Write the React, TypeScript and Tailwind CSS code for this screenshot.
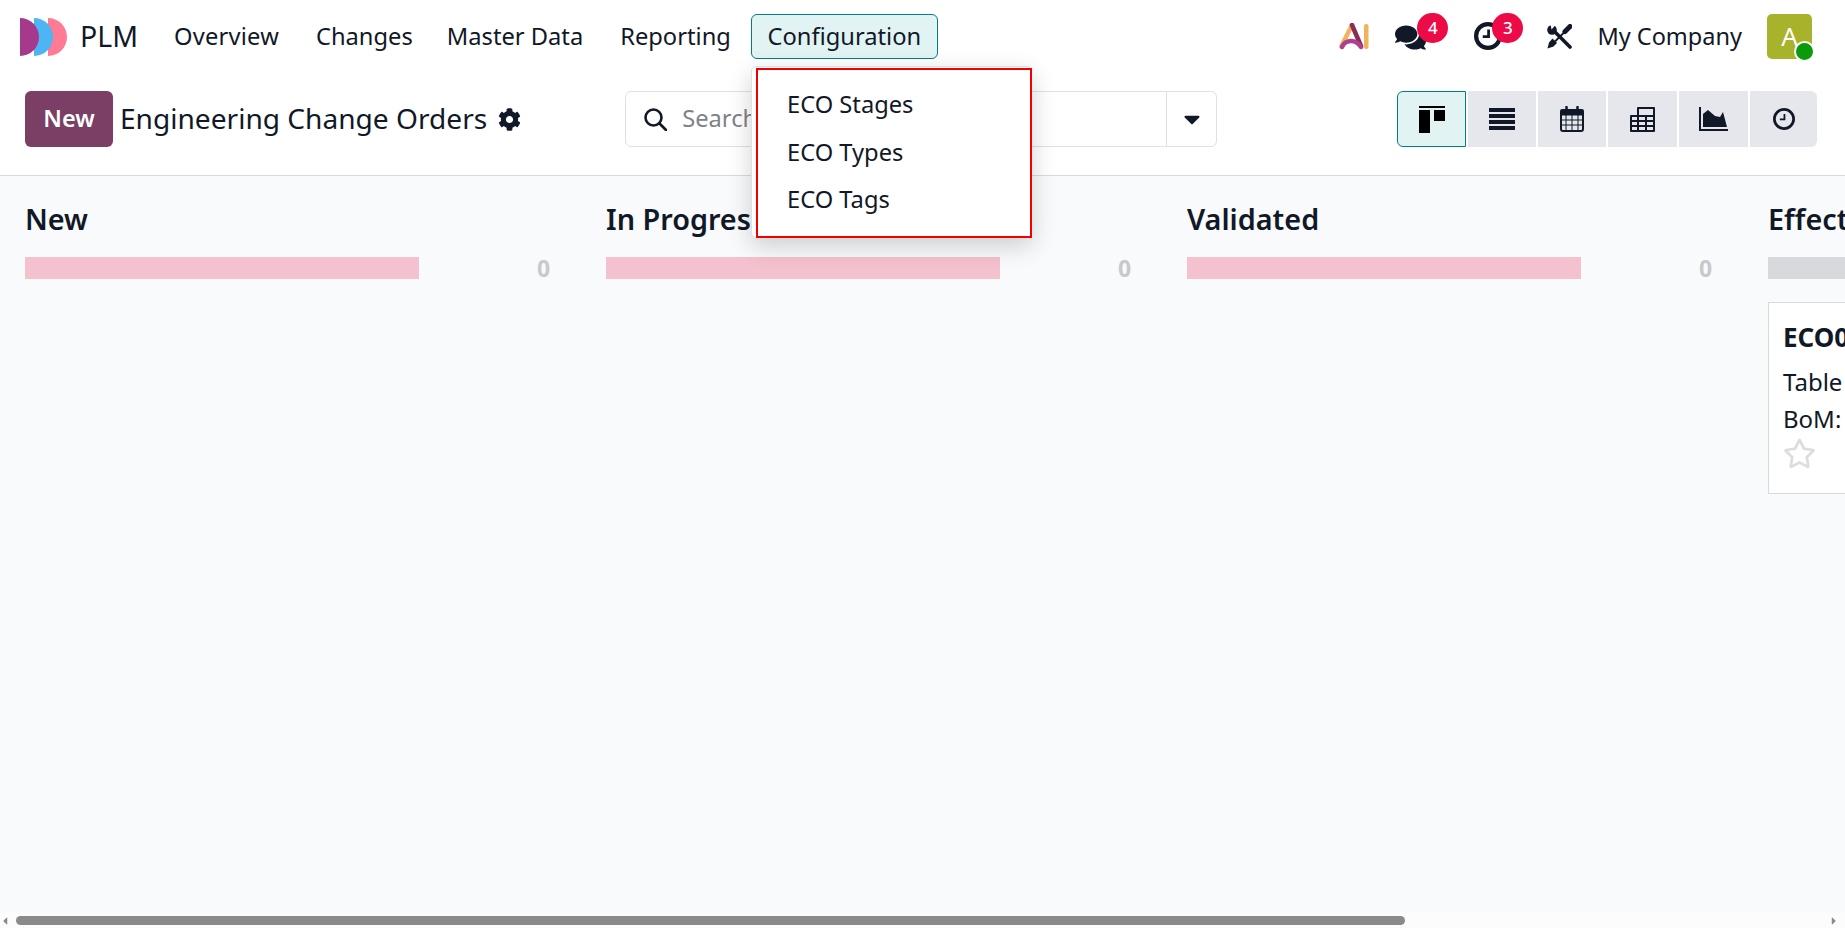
import React from "react";
import { FaComments, FaCog, FaCaretDown, FaRegStar, FaCaretLeft, FaCaretRight } from "react-icons/fa";

const ink = "text-[#111827]";

function Logo() {
  return (
    <svg width="47" height="38" viewBox="0 0 47 38" className="shrink-0">
      <path d="M0 0a19 19 0 0 1 0 38z" transform="translate(28 0)" fill="#ff7a93" />
      <path d="M0 0a19 19 0 0 1 0 38z" transform="translate(14 0)" fill="#4db5f3" />
      <path d="M0 0a19 19 0 0 1 0 38z" fill="#a53a8c" />
      <path d="M14 2.5a19 19 0 0 1 0 33a19 19 0 0 0 0-33z" fill="#1d3f8a" />
      <path d="M28 2.5a19 19 0 0 1 0 33a19 19 0 0 0 0-33z" fill="#2a4f9a" />
    </svg>
  );
}

function AiLogo() {
  return (
    <svg width="30" height="27" viewBox="0 0 30 27" className="shrink-0">
      <path d="M13 2L2.5 23" stroke="#f0b45c" strokeWidth="4.5" strokeLinecap="round" fill="none" />
      <path d="M13 2l9 21" stroke="#8d2d55" strokeWidth="4.5" strokeLinecap="round" fill="none" />
      <path d="M3 24c3-7 13-9 19 0" stroke="#b13f90" strokeWidth="4.5" strokeLinecap="round" fill="none" />
      <rect x="25" y="1" width="4.5" height="25" rx="2.2" fill="#f0b45c" />
    </svg>
  );
}

function ClockIcon({ size, sw }: { size: number; sw: number }) {
  return (
    <svg width={size} height={size} viewBox="0 0 24 24" fill="none" stroke="#111827">
      <circle cx="12" cy="12" r={12 - sw / 2} strokeWidth={sw} />
      <path d="M12.5 6.5v6H7.5" strokeWidth={sw * 0.65} />
    </svg>
  );
}

function ToolsIcon() {
  return (
    <svg width="25" height="25" viewBox="0 0 25 25" className="shrink-0">
      <path d="M7 7L23 23" stroke="#111827" strokeWidth="3.6" strokeLinecap="round" />
      <circle cx="5" cy="6" r="4.8" fill="#111827" />
      <path d="M4.500 5.500L3.500 0L9 .5z" fill="#fff" />
      <path d="M23 2.500L18 7.500" stroke="#111827" strokeWidth="5" strokeLinecap="round" />
      <path d="M18 7.500L8 17.500" stroke="#111827" strokeWidth="1.8" />
      <path d="M5.500 14.500l4.500 4.500-3.500 3.500L0.500 24.500l1.500-6z" fill="#111827" />
    </svg>
  );
}

function SearchIcon() {
  return (
    <svg width="23" height="23" viewBox="0 0 23 23" fill="none" stroke="#111827" className="shrink-0">
      <circle cx="9.500" cy="9.500" r="8" strokeWidth="2.600" />
      <path d="M15.500 15.500L22 22" strokeWidth="2.800" strokeLinecap="round" />
    </svg>
  );
}

function KanbanIcon() {
  return (
    <svg width="26" height="27" viewBox="0 0 26 27" fill="#000">
      <rect x="0" y="0" width="26" height="2" />
      <rect x="0" y="4" width="11" height="23" />
      <rect x="15" y="4" width="11" height="11" />
    </svg>
  );
}

function ListIcon() {
  return (
    <svg width="26" height="22" viewBox="0 0 26 22" fill="#111827">
      <rect y="0" width="26" height="4" />
      <rect y="6" width="26" height="4" />
      <rect y="12" width="26" height="4" />
      <rect y="18" width="26" height="4" />
    </svg>
  );
}

function CalendarIcon() {
  return (
    <svg width="24" height="26" viewBox="0 0 24 26" fill="none" stroke="#111827">
      <rect x="1" y="4" width="22" height="21" rx="2" strokeWidth="2" />
      <rect x="1" y="4" width="22" height="5" fill="#111827" strokeWidth="1" />
      <path d="M6.500 1v6M17.500 1v6" strokeWidth="2.500" strokeLinecap="round" />
      <path d="M6 9v15M12 9v15M18 9v15M2 14h20M2 19h20" strokeWidth="1" />
    </svg>
  );
}

function PivotIcon() {
  return (
    <svg width="25" height="25" viewBox="0 0 25 25" fill="none" stroke="#111827" strokeWidth="2">
      <path d="M8 1h16v23H1V9h7z" strokeLinejoin="round" />
      <path d="M8 1v23M16 9v15M1 9h23M1 14h23M1 19h23" />
    </svg>
  );
}

function AreaIcon() {
  return (
    <svg width="29" height="24" viewBox="0 0 29 24" fill="#111827">
      <path d="M0 0h2v22h27v2H0z" />
      <path d="M4 20V7l5-4 7 6 5 1 3-5 4 15z" />
    </svg>
  );
}

function Nav({ label, className }: { label: string; className: string }) {
  return <span className={`text-[23.7px] leading-none ${className}`}>{label}</span>;
}

function Badge({ n, className }: { n: number; className: string }) {
  return (
    <span className={`absolute -top-[9px] flex h-[30px] w-[31px] items-center justify-center rounded-full bg-[#ec0a47] text-[17px] font-medium text-white ${className}`}>
      {n}
    </span>
  );
}

function Column({ title }: { title: string }) {
  return (
    <div className="mr-[32px] w-[549px] shrink-0">
      <h2 className="pt-[26px] text-[28.8px] font-semibold leading-[34px]">{title}</h2>
      <div className="mt-[21px] flex h-[22px] items-center justify-between">
        <div className="h-[22px] w-[394px] bg-[#f4c2cf]" />
        <span className="mr-[7px] w-[30px] text-[23px] font-bold text-[#c8c9cb]">0</span>
      </div>
    </div>
  );
}

export default function App() {
  return (
    <div
      className={`flex h-[928px] w-[1845px] flex-col overflow-hidden bg-white ${ink}`}
      style={{ fontFamily: '"Noto Sans", sans-serif' }}
    >
      <header className="relative flex h-[73px] shrink-0 items-center">
        <div className="ml-[20px] mt-[1px]"><Logo /></div>
        <span className="ml-[13px] text-[28.5px] leading-none">PLM</span>
        <Nav label="Overview" className="ml-[36px] tracking-[0.2px]" />
        <Nav label="Changes" className="ml-[37px]" />
        <Nav label="Master Data" className="ml-[34px]" />
        <Nav label="Reporting" className="ml-[37px]" />
        <div className="ml-[20px] flex h-[45px] w-[187px] items-center justify-center rounded-[6px] border border-[#017e84] bg-[#e2f3f3] text-[23.7px] leading-none">
          Configuration
        </div>
        <div className="ml-auto flex items-center">
          <AiLogo />
          <div className="relative ml-[26px] h-[30px] w-[32px]">
            <FaComments className="absolute left-0 top-0 text-[31px]" />
            <Badge n={4} className="left-[22px]" />
          </div>
          <div className="relative ml-[47px] h-[30px] w-[32px]">
            <div className="absolute left-0 top-0"><ClockIcon size={28} sw={3.600} /></div>
            <Badge n={3} className="left-[18px]" />
          </div>
          <div className="ml-[41px] flex"><ToolsIcon /></div>
          <span className="ml-[25px] text-[23.5px] leading-none">My Company</span>
          <div className="relative ml-[25px] mr-[33px] flex h-[45px] w-[45px] items-center justify-center rounded-[5px] bg-[#a8b32c] text-[26px] text-white">
            A
            <span className="absolute -bottom-[3px] -right-[3px] h-[21px] w-[21px] rounded-full border-[2px] border-white bg-[#0a9a0a]" />
          </div>
        </div>

        <div className="absolute left-[751px] top-[66px] z-10 h-[172px] w-[281px] rounded-[5px] border border-[#dfe1e4] bg-white shadow-[0_8px_24px_rgba(0,0,0,0.18)]">
          <div className="ml-[4px] mt-[1px] flex h-[170px] w-[276px] flex-col border-[2px] border-[#f00000] pl-[29px] pt-[11px] text-[23.7px]">
            <span className="flex h-[48px] items-center">ECO Stages</span>
            <span className="flex h-[47px] items-center">ECO Types</span>
            <span className="flex h-[47px] items-center">ECO Tags</span>
          </div>
        </div>
      </header>

      <section className="flex h-[103px] shrink-0 items-start border-b border-[#d8dadd] pt-[18px]">
        <button className="ml-[25px] flex h-[56px] w-[88px] items-center justify-center rounded-[6px] bg-[#7b3f66] text-[23.5px] font-semibold text-white">
          New
        </button>
        <span className="ml-[7px] mt-[8px] text-[28.1px] leading-[38px]">Engineering Change Orders</span>
        <FaCog className="ml-[11px] mt-[17px] text-[23px]" />
        <div className="ml-[104px] flex h-[56px] w-[592px] items-center rounded-[6px] border border-[#dfe1e4]">
          <div className="ml-[18px] flex"><SearchIcon /></div>
          <span className="ml-[15px] flex-1 text-[23.7px] text-[#7f8288]">Search...</span>
          <div className="flex h-full w-[50px] items-center justify-center border-l border-[#dfe1e4]">
            <FaCaretDown className="text-[26px]" />
          </div>
        </div>
        <div className="ml-[180px] flex h-[56px] gap-[2px]">
          <div className="flex w-[69px] items-center justify-center rounded-l-[6px] border border-[#017e84] bg-[#e2f3f3]"><KanbanIcon /></div>
          <div className="flex w-[68px] items-center justify-center bg-[#e6e7ec]"><ListIcon /></div>
          <div className="flex w-[68px] items-center justify-center bg-[#e6e7ec]"><CalendarIcon /></div>
          <div className="flex w-[69px] items-center justify-center bg-[#e6e7ec]"><PivotIcon /></div>
          <div className="flex w-[69px] items-center justify-center bg-[#e6e7ec]"><AreaIcon /></div>
          <div className="flex w-[67px] items-center justify-center rounded-r-[6px] bg-[#e6e7ec]"><ClockIcon size={22} sw={3} /></div>
        </div>
      </section>

      <main className="flex min-h-0 flex-1 overflow-hidden bg-[#f9fafb] pl-[25px]">
        <Column title="New" />
        <Column title="In Progress" />
        <Column title="Validated" />
        <div className="w-[549px] shrink-0">
          <h2 className="pt-[26px] text-[28.8px] font-semibold leading-[34px]">Effective</h2>
          <div className="mt-[21px] h-[22px] w-[394px] bg-[#d8d9dc]" />
          <div className="mt-[23px] h-[192px] w-[400px] border border-[#d8dadd] bg-white pl-[14px] pt-[17px]">
            <div className="text-[26px] font-bold leading-[34px]">ECO0001</div>
            <div className="mt-[12px] text-[24px] leading-[32px]">Table</div>
            <div className="mt-[5px] text-[24px] leading-[32px]">BoM: Table</div>
            <FaRegStar className="mt-[2px] text-[33px] text-[#dcdde1]" />
          </div>
        </div>
      </main>

      <div className="flex h-[15px] shrink-0 items-center bg-[#fcfcfc]">
        <FaCaretLeft className="ml-[-1px] text-[12px] text-[#8a8a8a]" />
        <div className="ml-[5px] h-[9px] w-[1389px] rounded-full bg-[#8a8a8a]" />
        <FaCaretRight className="ml-auto mr-[5px] text-[12px] text-[#8a8a8a]" />
      </div>
    </div>
  );
}
